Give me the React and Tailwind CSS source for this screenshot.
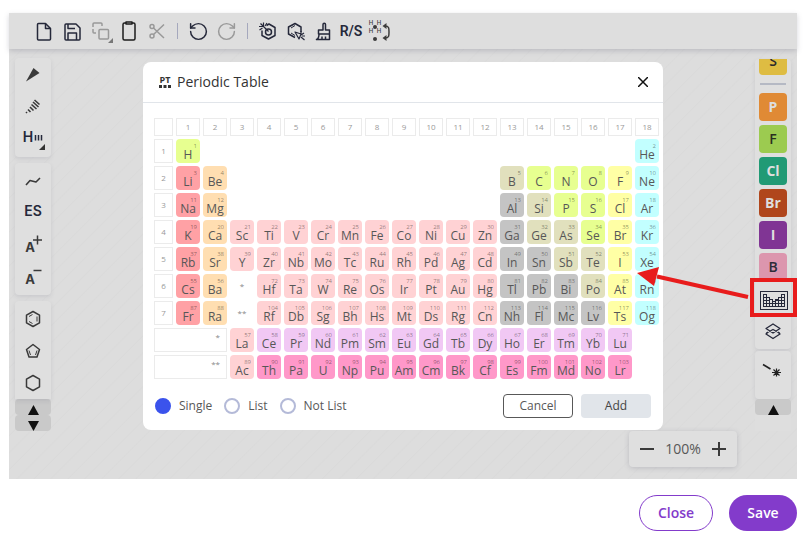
import React, { useState } from 'react';
import { RotateCcw, RotateCw } from 'lucide-react';

const SYMBOLS = (
  'H He Li Be B C N O F Ne Na Mg Al Si P S Cl Ar K Ca Sc Ti V Cr Mn Fe Co Ni Cu Zn Ga Ge As Se Br Kr ' +
  'Rb Sr Y Zr Nb Mo Tc Ru Rh Pd Ag Cd In Sn Sb Te I Xe Cs Ba La Ce Pr Nd Pm Sm Eu Gd Tb Dy Ho Er Tm Yb Lu ' +
  'Hf Ta W Re Os Ir Pt Au Hg Tl Pb Bi Po At Rn Fr Ra Ac Th Pa U Np Pu Am Cm Bk Cf Es Fm Md No Lr ' +
  'Rf Db Sg Bh Hs Mt Ds Rg Cn Nh Fl Mc Lv Ts Og'
).split(' ');

const GROUPS = [
  ['bg-[#e7ff90]', 'H C N O P S Se'],
  ['bg-[#ffa1a5]', 'Li Na K Rb Cs Fr'],
  ['bg-[#ffdeb1]', 'Be Mg Ca Sr Ba Ra'],
  ['bg-[#e1e0bd]', 'B Si Ge As Sb Te Po'],
  ['bg-[#c4c4c4]', 'Al Ga In Sn Tl Pb Bi Nh Fl Mc Lv'],
  ['bg-[#ffffa5]', 'F Cl Br I At Ts'],
  ['bg-[#c2ffff]', 'He Ne Ar Kr Xe Rn Og'],
  ['bg-[#f1c8f4]', 'Ce Pr Nd Pm Sm Eu Gd Tb Dy Ho Er Tm Yb Lu'],
  ['bg-[#ff98c9]', 'Th Pa U Np Pu Am Cm Bk Cf Es Fm Md No Lr'],
];

const colorOf = (symbol) => {
  const group = GROUPS.find(([, list]) => list.split(' ').includes(symbol));
  return group ? group[0] : 'bg-[#ffd2d4]';
};

const range = (from, to) => Array.from({ length: to - from + 1 }, (_, i) => from + i);
const blanks = (n) => Array(n).fill(null);

const PERIODS = [
  [1, ...blanks(16), 2],
  [3, 4, ...blanks(10), ...range(5, 10)],
  [11, 12, ...blanks(10), ...range(13, 18)],
  range(19, 36),
  range(37, 54),
  [55, 56, '*', ...range(72, 86)],
  [87, 88, '**', ...range(104, 118)],
];

const SERIES = [
  { mark: '*', cells: range(57, 71) },
  { mark: '**', cells: range(89, 103) },
];

const ATOMS = [
  { symbol: 'P', style: 'font-bold bg-[#e08a35] text-[#dedede]' },
  { symbol: 'F', style: 'font-semibold bg-[#9ccb50] text-[#2b3020]' },
  { symbol: 'Cl', style: 'font-bold bg-[#219a75] text-[#dedede]' },
  { symbol: 'Br', style: 'font-bold bg-[#b0461c] text-[#dedede]' },
  { symbol: 'I', style: 'font-bold bg-[#803594] text-[#dedede]' },
  { symbol: 'B', style: 'font-semibold bg-[#dc96ae] text-[#2c2c38]' },
];

function Icon({ children, width = 1.5, className = 'text-[#25283a]' }) {
  return (
    <svg
      width="20"
      height="20"
      viewBox="0 0 20 20"
      fill="none"
      stroke="currentColor"
      strokeWidth={width}
      strokeLinejoin="round"
      className={`overflow-visible shrink-0 ${className}`}
    >
      {children}
    </svg>
  );
}

function Label({ children, x = 10, y = 15, size = 14, weight = 600, font = 'Inter' }) {
  return (
    <text x={x} y={y} fontSize={size} fontWeight={weight} textAnchor="middle" fill="currentColor" stroke="none" fontFamily={`${font}, sans-serif`}>
      {children}
    </text>
  );
}

function Tool({ title, children, className = 'w-7 h-9' }) {
  return (
    <button type="button" aria-label={title} className={`flex items-center justify-center ${className}`}>
      {children}
    </button>
  );
}

function Separator() {
  return (
    <div className="w-3.5 flex justify-center">
      <div className="w-px h-4 bg-[#a5a8bd]" />
    </div>
  );
}

function TopBar() {
  return (
    <div className="relative flex items-center h-9 pl-[21px] bg-[#dedede] shadow-[0_2px_5px_rgba(90,90,110,0.25)]">
      <Tool title="New">
        <Icon>
          <path d="M4.5 2.5h7l5 5V18a1 1 0 0 1-1 1h-11a1 1 0 0 1-1-1V3.5a1 1 0 0 1 1-1z" />
          <path d="M11.5 2.5v5h5" />
        </Icon>
      </Tool>
      <Tool title="Save file">
        <Icon>
          <path d="M4 3h10l4 4v11a1 1 0 0 1-1 1H4a1 1 0 0 1-1-1V4a1 1 0 0 1 1-1z" />
          <path d="M6 3v4.5h7M6 19v-7h8.5v7" />
        </Icon>
      </Tool>
      <Tool title="Copy">
        <Icon className="text-[#999]">
          <rect x="9" y="8.5" width="9.5" height="9.5" rx="1" />
          <path d="M6 12H4a1 1 0 0 1-1-1V8M3 6V3a1 1 0 0 1 1-1h7a1 1 0 0 1 1 1v2" />
          <path d="M23 17v5h-5z" fill="#777" stroke="none" />
        </Icon>
      </Tool>
      <Tool title="Paste">
        <Icon className="text-[#1d1d1d]">
          <rect x="5" y="2" width="12" height="17" rx="1.5" />
          <path d="M8 3V1h6v2z" fill="#dedede" />
        </Icon>
      </Tool>
      <Tool title="Cut">
        <Icon className="text-[#999]">
          <circle cx="6" cy="5.5" r="2" />
          <circle cx="6" cy="15" r="2" />
          <path d="M7.5 7L18 17M7.5 13.5L18 3.5" />
        </Icon>
      </Tool>
      <Separator />
      <Tool title="Undo">
        <RotateCcw size={21} strokeWidth={1.7} className="text-[#25283a]" />
      </Tool>
      <Tool title="Redo">
        <RotateCw size={21} strokeWidth={1.7} className="text-[#999]" />
      </Tool>
      <Separator />
      <Tool title="Aromatize">
        <Icon>
          <path d="M8.5 4.5L11 3l6 3.5v8L10.5 18 4 14.5v-5" />
          <circle cx="10.5" cy="11" r="3" />
          <path d="M1 5.5h4M5.5 1.5V5M2.5 2.5l8 8M1.5 9l3-2M9 2L7 5" strokeWidth="1.2" />
        </Icon>
      </Tool>
      <Tool title="Dearomatize">
        <Icon>
          <path d="M9 16.5L2.5 13V6L9 2.5 15 6v5" />
          <path d="M5 7l4-2.5M5 12l4 2.5" strokeWidth="1" />
          <path d="M9 11l6 2-2 5zM15 10v3M18 12l-3 2M15 16l3.5 3M16 15h3" strokeWidth="1.2" />
        </Icon>
      </Tool>
      <Tool title="Clean up">
        <Icon>
          <path d="M9 9V3.5a1 1 0 0 1 2.5 0V9h4v4h-11V9zM5 13c0 3-1 5-2.5 5.5h13V13M8 18v-2.5M11.5 18v-2.5" />
        </Icon>
      </Tool>
      <Tool title="Calculate CIP">
        <Icon><Label x={9} font="Roboto">R/S</Label></Icon>
      </Tool>
      <Tool title="Explicit hydrogens">
        <Icon className="text-[#3c3c3c]">
          <Label x={1} y={4} size={6} weight={500}>H</Label>
          <Label x={9} y={4} size={6} weight={500}>H</Label>
          <Label x={1} y={12} size={6} weight={500}>H</Label>
          <Label x={9} y={12} size={6} weight={500}>H</Label>
          <circle cx="5" cy="6" r="2" fill="currentColor" stroke="none" />
          <circle cx="5" cy="18" r="2" fill="currentColor" stroke="none" />
          <path d="M15 5c4 0 4 2 4 6s0 6-4 6" />
          <path d="M12.5 5l4-3v6zM12.5 17l4-3v6z" fill="currentColor" stroke="none" />
        </Icon>
      </Tool>
    </div>
  );
}

const HEXAGON = 'M10 2.5l6.5 3.7v7.6L10 17.5l-6.5-3.7V6.2z';

function Panel({ children, className = '' }) {
  return (
    <div className={`flex flex-col items-center bg-[#dfdfdf] rounded shadow-[0_2px_4px_rgba(90,90,110,0.14)] ${className}`}>
      {children}
    </div>
  );
}

function ScrollButton({ down }) {
  return (
    <button
      type="button"
      aria-label={down ? 'Scroll down' : 'Scroll up'}
      className="flex items-end justify-center w-full h-4 rounded bg-[#c9c9c9]"
    >
      <svg width="11" height="10" viewBox="0 0 11 10" fill="#111">
        <path d={down ? 'M0 0h11L5.5 10z' : 'M0 10h11L5.5 0z'} />
      </svg>
    </button>
  );
}

function LeftBar() {
  const size = 'w-9 h-8';
  const dark = 'text-[#3a3a3a]';
  return (
    <div className="w-9">
      <div className="flex flex-col gap-1.5">
        <Panel className="-mt-[3px] pb-[3px]">
          <Tool title="Wedge bond" className={size}>
            <Icon className={dark}><path d="M3 17.5L10.5 4l6 5z" fill="currentColor" stroke="none" /></Icon>
          </Tool>
          <Tool title="Hashed bond" className={size}>
            <Icon className={dark} width={1.6}>
              <path d="M3 16l1 1M5 13.5L7.5 16M7 11l3.5 3.5M8.5 8.5l5 4.5M10 6l5.5 5M11.5 4l5 4.5" />
            </Icon>
          </Tool>
          <Tool title="Hydrogen bond" className={size}>
            <Icon>
              <Label x={5} y={14}>H</Label>
              <path d="M12.5 7v5.5M15.5 7v5.5M18.5 7v5.5" />
              <path d="M22 16v6h-6z" fill="#333" stroke="none" />
            </Icon>
          </Tool>
        </Panel>
        <Panel className="py-0.5">
          <Tool title="Chain" className={size}>
            <Icon className={dark} width={1.6}><path d="M3 14l4-4.5 6 1.5 4-4" /></Icon>
          </Tool>
          <Tool title="Extended stereo" className={size}>
            <Icon><Label y={13}>ES</Label></Icon>
          </Tool>
          <Tool title="Charge plus" className={size}>
            <Icon className={dark}>
              <Label x={7} y={17} size={13} weight={700}>A</Label>
              <path d="M10 5h9M14.5 .5v9" />
            </Icon>
          </Tool>
          <Tool title="Charge minus" className={size}>
            <Icon className={dark}>
              <Label x={7} y={17} size={13} weight={700}>A</Label>
              <path d="M10.5 3.5h8" />
            </Icon>
          </Tool>
        </Panel>
        <Panel className="pt-0.5 rounded-b-none">
          <Tool title="Benzene" className={size}>
            <Icon className={dark}>
              <path d={HEXAGON} />
              <path d="M6 7.5l3.5-2M6 12.5l3.5 2M14 7.5v5" strokeWidth="1" />
            </Icon>
          </Tool>
          <Tool title="Cyclopentadiene" className={size}>
            <Icon className={dark}>
              <path d="M10 3.5l6.5 5L14 16H6L3.5 8.5z" />
              <path d="M6 9.5L7.5 14M14 9.5L12.5 14" strokeWidth="1" />
            </Icon>
          </Tool>
          <Tool title="Cyclohexane" className={size}>
            <Icon className={dark}><path d={HEXAGON} /></Icon>
          </Tool>
        </Panel>
      </div>
      <ScrollButton />
      <ScrollButton down />
    </div>
  );
}

function RightBar() {
  const chip = 'w-7 h-7 shrink-0 rounded text-sm leading-7 text-center';
  return (
    <div className="w-9 -mt-0.5">
      <Panel className="pb-0.5">
        <div className="flex items-end h-4 overflow-hidden">
          <button type="button" className={`${chip} font-semibold bg-[#debc42] text-[#2b2b2b]`}>S</button>
        </div>
        <div className="w-[26px] h-0.5 my-2 bg-[#b5b9c4]" />
        <div className="flex flex-col gap-1">
          {ATOMS.map(({ symbol, style }) => (
            <button key={symbol} type="button" className={`${chip} ${style}`}>{symbol}</button>
          ))}
        </div>
        <Tool title="Periodic table" className="w-9 h-9">
          <svg width="28" height="20" viewBox="0 0 28 20" fill="none" stroke="#25283a" shapeRendering="crispEdges" className="overflow-visible shrink-0">
            <rect x="1.5" y="2.5" width="27" height="18" />
            <path d="M4.5 5.5h3v3h3v2h3v2h3v-2h3v-2h3v-3h3v12h-21zM7.5 8v9M10.5 10v7M13.5 12v5M16.5 12v5M19.5 10v7M22.5 8v9M4.5 8.5h3M4.5 11.5h6M4.5 14.5h21M16.5 11.5h9M22.5 8.5h3" />
          </svg>
        </Tool>
        <Tool title="Extended table" className="w-9 h-[30px]">
          <Icon width={1.3}>
            <path d="M10 2l7 4.5-7 4.5-7-4.5zM3.5 11L10 7.5l6.5 3.5" />
            <path d="M5 10l-2 2 7 4.5 7-4.5-2-2" />
          </Icon>
        </Tool>
      </Panel>
      <Panel className="mt-0.5 pb-2">
        <Tool title="Any bond" className="w-9 h-10">
          <Icon width={1.2} className="text-[#222]">
            <path d="M0 3.5L7.5 8" strokeWidth="1.6" />
            <path d="M13.5 7.5v8M9 11.5h9M10.5 8.5l6 6M16.5 8.5l-6 6" />
          </Icon>
        </Tool>
      </Panel>
      <ScrollButton />
      <div className="h-4 bg-[#dedede]" />
    </div>
  );
}

function Cell({ z, selected, onSelect }) {
  if (z === null) return <td />;
  if (typeof z === 'string') return <td className="p-0 text-center text-[8px] leading-3 text-[#888]">{z}</td>;
  const symbol = SYMBOLS[z - 1];
  return (
    <td className="p-0">
      <button
        type="button"
        aria-pressed={selected}
        onClick={() => onSelect(z)}
        className={`block w-full h-6 pt-1 pb-0.5 rounded text-[#575757] ${colorOf(symbol)}`}
      >
        <span className="block pr-[3px] text-right text-[6px] leading-[6px] text-black/45">{z}</span>
        <span className="block text-center text-xs leading-3">{symbol}</span>
      </button>
    </td>
  );
}

function ElementTable() {
  const [selected, setSelected] = useState(null);
  const head = 'p-0 border border-[#ebebeb] text-[8px] leading-3 font-normal text-[#999]';
  const renderCell = (z, i) => (
    <Cell key={i} z={z} selected={z !== null && selected === z} onSelect={setSelected} />
  );
  return (
    <table className="w-full table-fixed border-separate border-spacing-[3px]">
      <thead>
        <tr className="h-[18px]">
          <th className={`${head} w-[19px]`} />
          {range(1, 18).map((n) => (
            <th key={n} scope="col" className={head}>{n}</th>
          ))}
        </tr>
      </thead>
      <tbody>
        {PERIODS.map((cells, i) => (
          <tr key={i} className="h-6">
            <th scope="row" className={head}>{i + 1}</th>
            {cells.map(renderCell)}
          </tr>
        ))}
        {SERIES.map(({ mark, cells }) => (
          <tr key={mark} className="h-6">
            <th scope="row" colSpan={3} className="p-0 pr-1.5 align-top border border-[#ebebeb] text-right text-[8px] leading-4 font-normal text-[#888]">
              {mark}
            </th>
            {cells.map(renderCell)}
            <td />
          </tr>
        ))}
      </tbody>
    </table>
  );
}

function PeriodicTableDialog() {
  const [mode, setMode] = useState('Single');
  return (
    <div role="dialog" aria-label="Periodic Table" className="absolute inset-x-0 top-[49px] mx-auto w-[520px] bg-white rounded-lg">
      <div className="flex items-center h-[41px] pl-4 pr-[15px] border-b border-[#e1e5ea]">
        <svg width="12" height="12" viewBox="0 0 12 12" fill="#333" className="overflow-visible">
          <text x="6" y="7" fontSize="9" fontWeight="700" textAnchor="middle" fontFamily="Open Sans, sans-serif">PT</text>
          <path d="M0 9h3v3H0zM4.5 9h3v3h-3zM9 9h3v3H9z" />
        </svg>
        <h2 className="flex-1 pl-1.5 text-sm text-[#333]">Periodic Table</h2>
        <button type="button" aria-label="Close dialog">
          <svg width="10" height="10" viewBox="0 0 10 10" stroke="#111" strokeWidth="1.5">
            <path d="M0 0l10 10M10 0L0 10" />
          </svg>
        </button>
      </div>
      <div className="pt-3 pl-2 pr-px">
        <ElementTable />
      </div>
      <div className="flex items-center justify-between p-3">
        <div className="flex gap-3">
          {['Single', 'List', 'Not List'].map((name) => (
            <label key={name} className="flex items-center gap-2 text-xs text-[#585858]">
              <input
                type="radio"
                name="mode"
                checked={mode === name}
                onChange={() => setMode(name)}
                className="appearance-none w-4 h-4 rounded-full border-2 border-[#b4bad8] checked:border-[#3b53ec] checked:bg-[#3b53ec]"
              />
              {name}
            </label>
          ))}
        </div>
        <div className="flex gap-2">
          <button type="button" className="w-[70px] h-6 rounded border border-[#585858] text-xs text-[#585858]">Cancel</button>
          <button type="button" className="w-[70px] h-6 rounded bg-[#e1e5ea] text-xs text-[#444]">Add</button>
        </div>
      </div>
    </div>
  );
}

function ZoomControl() {
  return (
    <div className="absolute right-[60px] bottom-3 flex items-center justify-between w-[108px] h-9 px-[11px] rounded bg-[#dfdfdf] shadow-[0_1px_5px_rgba(90,90,110,0.25)] text-sm text-[#585858]">
      <button type="button" aria-label="Zoom out">
        <svg width="14" height="14" viewBox="0 0 14 14" stroke="#3a3a3a" strokeWidth="2"><path d="M0 7h14" /></svg>
      </button>
      <span>100%</span>
      <button type="button" aria-label="Zoom in">
        <svg width="14" height="14" viewBox="0 0 14 14" stroke="#3a3a3a" strokeWidth="2"><path d="M0 7h14M7 0v14" /></svg>
      </button>
    </div>
  );
}

// Red pointer from the boxed toolbar button to the dialog
function Callout() {
  return (
    <svg width="162" height="60" viewBox="0 0 162 60" className="absolute right-0 top-[247px] pointer-events-none" fill="none" stroke="#e81c1c" strokeWidth="4">
      <rect x="117" y="20" width="43" height="35" />
      <path d="M22 16.5L113 37" />
      <path d="M2 13l22-6-5 19z" fill="#e81c1c" stroke="none" />
    </svg>
  );
}

export default function App() {
  return (
    <div className="pt-[13px] pl-[9px] pr-[13px] bg-white font-['Open_Sans',sans-serif]">
      <div className="relative bg-[#dcdcdc] bg-[repeating-linear-gradient(135deg,#dddddd_0px,#dddddd_10px,#dadada_11px,#dddddd_12px)]">
        <TopBar />
        <div className="flex items-start justify-between pt-3 px-1.5 pb-12">
          <LeftBar />
          <RightBar />
        </div>
        <ZoomControl />
        <PeriodicTableDialog />
        <Callout />
      </div>
      <div className="flex justify-end gap-4 pt-4">
        <button type="button" className="w-[74px] h-9 rounded-full border border-[#833bcb] text-sm font-semibold text-[#833bcb]">Close</button>
        <button type="button" className="w-[68px] h-9 rounded-full bg-[#833bcb] text-sm font-semibold text-white">Save</button>
      </div>
    </div>
  );
}
